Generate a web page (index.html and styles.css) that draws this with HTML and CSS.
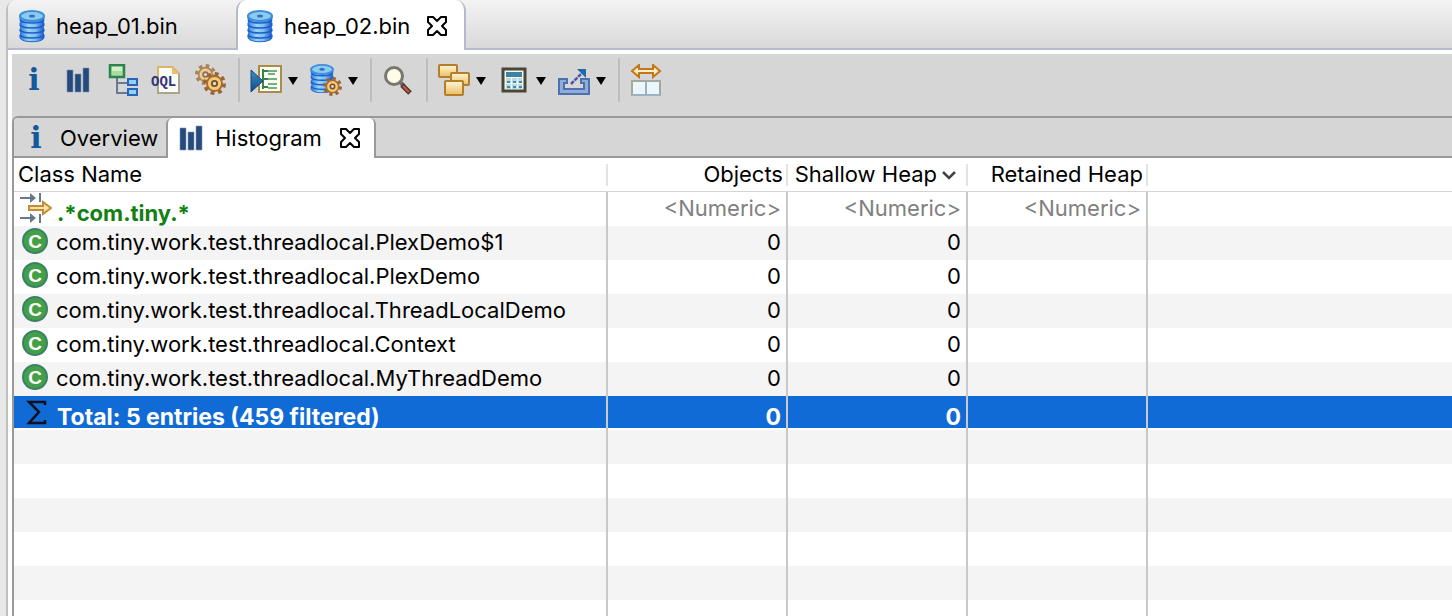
FILE: index.html
```html
<!DOCTYPE html>
<html lang="en">
<head>
<meta charset="utf-8">
<title>heap_02.bin</title>
<link rel="stylesheet" href="styles.css">
</head>
<body>
<svg class="defs" aria-hidden="true">
  <defs>
    <linearGradient id="g-db" x1="0" x2="1" y1="0" y2="0"><stop offset="0" stop-color="#2b7fd8"/><stop offset=".35" stop-color="#9cd4f2"/><stop offset=".65" stop-color="#7cc0ee"/><stop offset="1" stop-color="#1a55c4"/></linearGradient>
    <linearGradient id="g-gold" x1="0" x2="0" y1="0" y2="1"><stop offset="0" stop-color="#fff6d8"/><stop offset="1" stop-color="#e9be62"/></linearGradient>
    <linearGradient id="g-blue" x1="0" x2="0" y1="0" y2="1"><stop offset="0" stop-color="#3f8fc6"/><stop offset="1" stop-color="#0e4a8c"/></linearGradient>
    <symbol id="db" viewBox="0 0 26 32">
      <path d="M1 5v4l1 2-1 2v2l1 2-1 2v2l1 2-1 2v3c2 5 22 5 24 0v-3l-1-2 1-2v-2l-1-2 1-2v-2l-1-2 1-2V5z" fill="url(#g-db)" stroke="#2468cc"/>
      <path d="M1 10c3 4 21 4 24 0M1 15c3 4 21 4 24 0M1 20c3 4 21 4 24 0M1 25c3 4 21 4 24 0" fill="none" stroke="#1c5cd0" stroke-width="1.6"/>
      <ellipse cx="13" cy="6" rx="12" ry="5" fill="#8ccbed" stroke="#3c8edb" stroke-width="2"/>
      <ellipse cx="13" cy="6" rx="3" ry="1.5" fill="#3172b8"/>
    </symbol>
    <symbol id="info" viewBox="0 0 32 32"><text x="16" y="26" text-anchor="middle" class="glyph-i">i</text></symbol>
    <symbol id="bars" viewBox="0 0 32 32"><path d="M5 6h6v22H5zM13 10h6v18h-6zM21 4h6v24h-6z" fill="#254a7b" stroke="#7f93b5" stroke-width=".6"/></symbol>
    <symbol id="gear" viewBox="0 0 20 20">
      <circle cx="10" cy="10" r="8" fill="none" stroke="#9b6532" stroke-width="4" stroke-dasharray="3.14 3.14"/>
      <circle cx="10" cy="10" r="6.5" fill="#f2cb74" stroke="#a56b30" stroke-width="1.6"/>
      <circle cx="10" cy="10" r="2.3" fill="#e4dccd" stroke="#7c4b2c" stroke-width="1.6"/>
    </symbol>
    <symbol id="close" viewBox="0 0 20 20"><path d="M1 1h5l4 4 4-4h5v5l-4 4 4 4v5h-5l-4-4-4 4H1v-5l4-4-4-4z" fill="#fff" stroke="#000" stroke-width="2" stroke-linejoin="round"/></symbol>
    <symbol id="class" viewBox="0 0 26 26"><circle cx="13" cy="13" r="12" fill="#43a047" stroke="#3b806b" stroke-width="2"/><text x="13" y="20" text-anchor="middle" class="glyph-c">C</text></symbol>
  </defs>
</svg>

<div class="app">
  <nav class="editor-tabs" aria-label="Open files">
    <button class="editor-tab"><svg class="icon-db"><use href="#db"/></svg><span>heap_01.bin</span></button>
    <button class="editor-tab active" aria-current="true"><svg class="icon-db"><use href="#db"/></svg><span>heap_02.bin</span><svg class="icon-close"><use href="#close"/></svg></button>
  </nav>

  <main class="editor">
    <div class="toolbar" role="toolbar">
      <div class="plain">
        <button class="tool" aria-label="Overview"><svg class="icon"><use href="#info"/></svg></button>
        <button class="tool" aria-label="Histogram"><svg class="icon"><use href="#bars"/></svg></button>
        <button class="tool" aria-label="Dominator tree"><svg class="icon" viewBox="0 0 32 32">
          <path d="M11 14v15h10M11 19h10" fill="none" stroke="#6a7a91" stroke-width="2"/>
          <rect x="4" y="1" width="14" height="12" fill="#a9dc95" stroke="#2b8252" stroke-width="2.5"/><path d="M6 3h10v4H6z" fill="#d3efc8"/>
          <g fill="#8fd2f8" stroke="#2b66b4" stroke-width="2"><rect x="22" y="15" width="9" height="6"/><rect x="22" y="25" width="9" height="6"/></g></svg></button>
        <button class="tool" aria-label="Object query language"><svg class="icon" viewBox="0 0 32 32">
          <path d="M8 3h14l7 7v19H8z" fill="#fbfaf4" stroke="#a9a68c" stroke-width="2"/><path d="M8 16V3h14l7 7" fill="none" stroke="#d9b56a" stroke-width="2"/><path d="M22 3v7h7z" fill="#eec06b"/>
          <text x="1" y="22" class="glyph-oql">OQL</text></svg></button>
        <button class="tool" aria-label="Reports"><svg class="icon" viewBox="0 0 32 32"><g class="faded"><use href="#gear" x="1" y="0" width="21" height="21"/></g><use href="#gear" x="9" y="8" width="23" height="23"/></svg></button>
      </div>
      <span class="sep"></span>
      <div class="group">
        <button class="drop" aria-label="Run report"><svg class="icon" viewBox="0 0 32 32">
          <rect x="9" y="2" width="22" height="26" fill="#fdfdf4" stroke="#a88c48" stroke-width="2"/>
          <path d="M13 5v20M13 7h5M13 15h5M13 23h5" stroke="#36814e" stroke-width="2" fill="none"/><path d="M18 7h9M18 15h9M18 20h9M18 24h9M18 10h7" stroke="#70b183" stroke-width="2"/>
          <path d="M1 6l12 11L1 28z" fill="url(#g-blue)" stroke="#174878"/></svg><span class="caret"></span></button>
        <button class="drop" aria-label="Open query browser"><svg class="icon" viewBox="0 0 32 32"><use href="#db" x="0" y="0" width="24" height="29"/><use href="#gear" x="13" y="13" width="19" height="19"/></svg><span class="caret"></span></button>
      </div>
      <span class="sep"></span>
      <button class="single" aria-label="Find"><svg class="icon" viewBox="0 0 32 32">
        <path d="M17 17l5 5" stroke="#6b6b6b" stroke-width="4"/><path d="M20 21l8 8" stroke="#5a3029" stroke-width="5"/><path d="M21 22l6 6" stroke="#b6654a" stroke-width="2"/>
        <circle cx="12" cy="12" r="8.5" fill="#fffbe9" stroke="#77776f" stroke-width="3"/></svg></button>
      <span class="sep"></span>
      <div class="group">
        <button class="drop" aria-label="Group result"><svg class="icon" viewBox="0 0 32 32">
          <g fill="url(#g-gold)" stroke="#b67d2a" stroke-width="2"><rect x="1" y="1" width="18" height="12" rx="1"/><rect x="13" y="9" width="18" height="12" rx="1"/><rect x="7" y="17" width="18" height="14" rx="1"/></g></svg><span class="caret"></span></button>
        <button class="drop" aria-label="Calculate retained size"><svg class="icon" viewBox="0 0 32 32">
          <rect x="5" y="5" width="22" height="22" fill="#f8f7df" stroke="#48463a" stroke-width="3"/><path d="M8 8h16v5H8z" fill="#3b83a8"/>
          <g fill="#b9dbe8"><path d="M8 14h5v5H8zM14 14h5v5h-5zM20 14h4v5h-4zM8 20h5v5H8zM14 20h5v5h-5zM20 20h4v5h-4z"/></g>
          <path d="M9 17h3v2H9zM15 17h3v2h-3zM21 17h3v2h-3zM9 22h3v2H9zM15 22h3v2h-3zM21 22h3v2h-3z" fill="#3a8db5"/></svg><span class="caret"></span></button>
        <button class="drop" aria-label="Export"><svg class="icon" viewBox="0 0 32 32">
          <path d="M1 15h8v4H6v6h20v-6h-3v-4h8v15H1z" fill="#8fadd8" stroke="#4d71ae" stroke-width="2"/>
          <path d="M13 20L25 8" stroke="#5252a8" stroke-width="2.5" stroke-dasharray="4 1"/><path d="M19 5h9v9l-3-3-3-3z" fill="#1f6ba9"/></svg><span class="caret"></span></button>
      </div>
      <span class="sep"></span>
      <button class="single" aria-label="Compare"><svg class="icon" viewBox="0 0 32 32">
        <path d="M2 7l7-6v4h14V1l7 6-7 6V9H9v4z" fill="#fff1c6" stroke="#c4761b" stroke-width="2"/>
        <rect x="2" y="17" width="28" height="14" fill="#eaf6fc" stroke="#a3a99b" stroke-width="2"/><path d="M2 31h28M16 17v14" stroke="#9ab2c3" stroke-width="2"/></svg></button>
    </div>

    <section class="pane">
      <nav class="view-tabs" aria-label="Views">
        <button class="view-tab"><svg class="icon"><use href="#info"/></svg><span>Overview</span></button>
        <button class="view-tab active" aria-current="true"><svg class="icon"><use href="#bars"/></svg><span>Histogram</span><svg class="icon-close"><use href="#close"/></svg></button>
      </nav>
      <table class="histogram">
        <colgroup><col class="col-name"><col class="col-num"><col class="col-num"><col class="col-num"><col></colgroup>
        <thead><tr><th>Class Name</th><th>Objects</th><th>Shallow Heap<svg class="sort" viewBox="0 0 16 10"><path d="M2 2l6 6 6-6" fill="none" stroke="#444" stroke-width="2.5"/></svg></th><th>Retained Heap</th><th></th></tr></thead>
        <tbody>
          <tr class="filter"><td><div class="name"><svg class="icon" viewBox="0 0 32 32">
            <g stroke="#66798a" stroke-width="2" fill="none"><path d="M0 6h14M0 26h14"/><path d="M20 1v9M20 22v9"/></g><path d="M10 1l6 5-6 5zM10 21l6 5-6 5z" fill="#66798a"/>
            <path d="M9 14h14v-4l8 6-8 6v-4H9z" fill="#fbe3a6" stroke="#c48a36" stroke-width="2"/></svg><span class="low">.*com.tiny.*</span></div></td><td>&lt;Numeric&gt;</td><td>&lt;Numeric&gt;</td><td>&lt;Numeric&gt;</td><td></td></tr>
          <tr><td><div class="name"><svg class="icon-class"><use href="#class"/></svg><span>com.tiny.work.test.threadlocal.PlexDemo$1</span></div></td><td>0</td><td>0</td><td></td><td></td></tr>
          <tr><td><div class="name"><svg class="icon-class"><use href="#class"/></svg><span>com.tiny.work.test.threadlocal.PlexDemo</span></div></td><td>0</td><td>0</td><td></td><td></td></tr>
          <tr><td><div class="name"><svg class="icon-class"><use href="#class"/></svg><span>com.tiny.work.test.threadlocal.ThreadLocalDemo</span></div></td><td>0</td><td>0</td><td></td><td></td></tr>
          <tr><td><div class="name"><svg class="icon-class"><use href="#class"/></svg><span>com.tiny.work.test.threadlocal.Context</span></div></td><td>0</td><td>0</td><td></td><td></td></tr>
          <tr><td><div class="name"><svg class="icon-class"><use href="#class"/></svg><span>com.tiny.work.test.threadlocal.MyThreadDemo</span></div></td><td>0</td><td>0</td><td></td><td></td></tr>
          <tr class="total"><td><div class="name"><svg class="icon" viewBox="0 0 32 32"><path d="M25 9V6H9l10 10L9 27h16v-3" fill="none" stroke="#10101c" stroke-width="2.5"/></svg><span class="low">Total: 5 entries (459 filtered)</span></div></td><td><span class="low">0</span></td><td><span class="low">0</span></td><td></td><td></td></tr>
          <tr><td></td><td></td><td></td><td></td><td></td></tr>
          <tr><td></td><td></td><td></td><td></td><td></td></tr>
          <tr><td></td><td></td><td></td><td></td><td></td></tr>
          <tr><td></td><td></td><td></td><td></td><td></td></tr>
          <tr><td></td><td></td><td></td><td></td><td></td></tr>
          <tr><td></td><td></td><td></td><td></td><td></td></tr>
        </tbody>
      </table>
    </section>
  </main>
</div>
</body>
</html>
```
FILE: styles.css
```css
* { box-sizing: border-box; }
body {
  margin: 0;
  height: 100vh;
  overflow: hidden;
  background: #e8e8e8;
  color: #000;
  font: 22px/34px Inter, "Liberation Sans", sans-serif;
}
button {
  margin: 0;
  padding: 0;
  border: 0;
  background: none;
  color: inherit;
  font: inherit;
}
svg { display: block; flex: none; }
.defs { position: absolute; width: 0; height: 0; }
.icon { width: 32px; height: 32px; }
.icon-db { width: 26px; height: 34px; }
.icon-close { width: 20px; height: 20px; }
.icon-class { width: 26px; height: 26px; }
.glyph-i { font: bold 30px "DejaVu Serif", serif; fill: #15599c; }
.glyph-c { font: bold 19px "Liberation Sans", sans-serif; fill: #fff; }
.glyph-oql { font: bold 14px "Liberation Mono", monospace; fill: #33337f; }
.faded { opacity: .75; }

.app {
  display: flex;
  flex-direction: column;
  min-height: 100vh;
  margin-left: 6px;
  border-left: 2px solid #c0c0bc;
  border-top-left-radius: 10px;
  background: #fff;
}
.editor-tabs {
  display: flex;
  height: 50px;
  border-top-left-radius: 8px;
  background: linear-gradient(#f3f3f3, #d8d8d8);
  box-shadow: inset 0 -2px #b4b9cd;
}
.editor-tab {
  display: flex;
  align-items: center;
  gap: 11px;
  width: 228px;
  padding: 2px 0 0 11px;
}
.editor-tab.active {
  width: 230px;
  padding-left: 9px;
  border: 2px solid #b4b9cd;
  border-width: 0 2px;
  border-radius: 10px 10px 0 0;
  background: #fff;
}
.editor-tab .icon-close { margin-left: 6px; }

.editor { flex: 1; padding: 4px 0 0 4px; }
.toolbar {
  display: flex;
  height: 62px;
  padding: 4px 0 14px;
  background: #d6d6d6;
}
.plain { display: flex; margin-right: -6px; }
.tool { display: flex; align-items: center; justify-content: center; width: 44px; }
.sep { width: 2px; margin: 0 10px 0 12px; background: #bebebe; }
.group { display: flex; gap: 12px; }
.drop { display: flex; align-items: center; gap: 6px; }
.single { display: flex; align-items: center; }
.caret {
  margin-top: 2px;
  border: 5px solid transparent;
  border-top: 8px solid #000;
  border-bottom: 0;
}

.pane {
  border: 2px solid #999;
  border-width: 2px 0 0 2px;
  border-top-left-radius: 6px;
  background: #fff;
  overflow: hidden;
}
.editor { background: linear-gradient(#d6d6d6, #d6d6d6) no-repeat 4px 4px / 100% 80px; }
.view-tabs {
  display: flex;
  height: 40px;
  background: #d6d6d6;
  box-shadow: inset 0 -2px #999;
}
.view-tab { display: flex; align-items: center; gap: 8px; width: 152px; padding-left: 6px; }
.view-tab.active {
  width: 210px;
  padding-left: 7px;
  border: 2px solid #999;
  border-width: 0 2px;
  border-radius: 6px 6px 0 0;
  background: #fff;
}
.view-tab .icon-close { margin-left: 10px; }

.histogram {
  width: 100%;
  table-layout: fixed;
  border-collapse: separate;
  border-spacing: 0;
}
.col-name { width: 594px; }
.col-num { width: 180px; }
th, td {
  height: 34px;
  padding: 0 5px 0 0;
  line-height: 32px;
  text-align: right;
  vertical-align: top;
  white-space: nowrap;
}
th {
  border-bottom: 1px solid #d4d4d4;
  background: linear-gradient(#e3e3e3, #e3e3e3) no-repeat right center / 2px 22px;
  font-weight: 400;
}
th:first-child { padding-left: 4px; text-align: left; }
th:last-child { background: none; }
td { padding-right: 5px; border-right: 2px solid #c9c9c9; }
td:last-child { border-right: 0; }
tbody tr:nth-child(even) { background: #f4f4f4; }
.name { display: flex; align-items: center; gap: 8px; height: 32px; padding-left: 8px; }
.name .icon { margin: 0 -3px 0 -2px; }
.icon-class { margin-top: -2px; }
.sort { display: inline-block; width: 16px; height: 10px; margin: 0 6px 2px 4px; }
.filter { color: #808080; }
.filter .name { color: #128012; font-weight: 700; }
.low { display: block; height: 32px; padding-top: 5px; }
.total {
  background: linear-gradient(#116bd7, #116bd7) no-repeat #fff top / 100% 32px;
  color: #fff;
  font-size: 23px;
  font-weight: 700;
}
```
